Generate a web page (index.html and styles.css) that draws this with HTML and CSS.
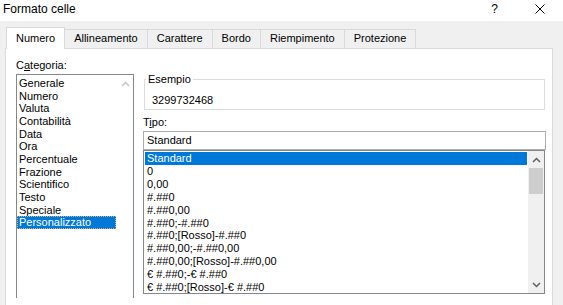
FILE: index.html
```html
<!DOCTYPE html>
<html lang="it">
<head>
    <meta charset="UTF-8">
    <title>Formato celle</title>
    <link rel="stylesheet" href="styles.css">
</head>
<body>

    <div class="titlebar">
        <span class="title">Formato celle</span>
        <span class="help">?</span>
        <svg class="close" width="10" height="10" viewBox="0 0 10 10">
            <path d="M0.5 0.5 L9.5 9.5 M9.5 0.5 L0.5 9.5" stroke="#000" stroke-width="1" fill="none"/>
        </svg>
    </div>

    <div class="dialog">
        <div class="tabs">
            <div class="tab active">Numero</div>
            <div class="tab">Allineamento</div>
            <div class="tab">Carattere</div>
            <div class="tab">Bordo</div>
            <div class="tab">Riempimento</div>
            <div class="tab">Protezione</div>
        </div>

        <div class="panel">
            <div class="col-left">
                <div class="label">C<u>a</u>tegoria:</div>
                <div class="listbox categories">
                    <ul class="items">
                        <li>Generale</li>
                        <li>Numero</li>
                        <li>Valuta</li>
                        <li>Contabilità</li>
                        <li>Data</li>
                        <li>Ora</li>
                        <li>Percentuale</li>
                        <li>Frazione</li>
                        <li>Scientifico</li>
                        <li>Testo</li>
                        <li>Speciale</li>
                        <li class="selected focus">Personalizzato</li>
                    </ul>
                    <div class="scrollbar disabled">
                        <div class="arrow">
                            <svg width="9" height="6" viewBox="0 0 9 6"><path d="M1 5 L4.5 1.5 L8 5" stroke="#c4c4c4" stroke-width="1.5" fill="none"/></svg>
                        </div>
                    </div>
                </div>
            </div>

            <div class="col-right">
                <fieldset class="sample">
                    <legend>Esempio</legend>
                    <div class="sample-value">3299732468</div>
                </fieldset>

                <div class="label">T<u>i</u>po:</div>
                <div class="input">Standard</div>

                <div class="listbox types">
                    <ul class="items">
                        <li class="selected">Standard</li>
                        <li>0</li>
                        <li>0,00</li>
                        <li>#.##0</li>
                        <li>#.##0,00</li>
                        <li>#.##0;-#.##0</li>
                        <li>#.##0;[Rosso]-#.##0</li>
                        <li>#.##0,00;-#.##0,00</li>
                        <li>#.##0,00;[Rosso]-#.##0,00</li>
                        <li>€ #.##0;-€ #.##0</li>
                        <li>€ #.##0;[Rosso]-€ #.##0</li>
                    </ul>
                    <div class="scrollbar">
                        <div class="arrow">
                            <svg width="9" height="6" viewBox="0 0 9 6"><path d="M1 5 L4.5 1.5 L8 5" stroke="#606060" stroke-width="1.5" fill="none"/></svg>
                        </div>
                        <div class="thumb"></div>
                        <div class="track"></div>
                        <div class="arrow">
                            <svg width="9" height="6" viewBox="0 0 9 6"><path d="M1 1 L4.5 4.5 L8 1" stroke="#606060" stroke-width="1.5" fill="none"/></svg>
                        </div>
                    </div>
                </div>
            </div>
        </div>
    </div>

</body>
</html>
```

FILE: styles.css
```css
body {
    margin: 0;
    width: 563px;
    height: 305px;
    overflow: hidden;
    font-family: 'Liberation Sans', Arial, sans-serif;
    font-size: 11px;
    color: #000;
    background: #f0f0f0;
}

ul {
    list-style: none;
    margin: 0;
    padding: 0;
}

.titlebar {
    height: 21px;
    background: #fff;
    display: flex;
    align-items: flex-start;
}

.title {
    flex: 1;
    font-size: 12px;
    line-height: 14px;
    padding: 2px 0 0 3px;
}

.help {
    font-size: 12px;
    line-height: 14px;
    padding-top: 2px;
    margin-right: 37px;
}

.close {
    margin: 4px 18px 0 0;
}

.dialog {
    height: 284px;
    background: #f0f0f0;
}

.tabs {
    display: flex;
    align-items: flex-end;
    height: 21px;
    margin-top: 6px;
    padding-left: 6px;
    position: relative;
    z-index: 1;
}

.tab {
    height: 18px;
    line-height: 17px;
    padding: 0 9px;
    border: 1px solid #d9d9d9;
    border-bottom: none;
    margin-left: -1px;
    background: #f0f0f0;
}

.tab:first-child {
    margin-left: 0;
}

.tab.active {
    height: 21px;
    line-height: 21px;
    background: #fff;
    margin-bottom: -1px;
    position: relative;
    z-index: 2;
}

.panel {
    margin: 0 10px 0 5px;
    height: 257px;
    background: #fff;
    border: 1px solid #d9d9d9;
    border-bottom: none;
    padding: 10px 0 0 10px;
    box-sizing: border-box;
    display: grid;
    grid-template-columns: 118px 403px;
    column-gap: 9px;
    align-items: start;
    overflow: hidden;
}

.label {
    line-height: 13px;
}

.listbox {
    display: flex;
    border: 1px solid #828790;
    box-sizing: border-box;
}

.items li {
    line-height: 12.9px;
    padding-left: 2px;
    white-space: nowrap;
}

.items li.selected {
    background: #0078d7;
    color: #fff;
}

.items li.focus {
    outline: 1px dotted #d9b26a;
    outline-offset: -1px;
}

/* Categoria */
.categories {
    margin-top: 2px;
    height: 224px;
    border-bottom: none;
}

.categories .items {
    width: 99px;
    padding-top: 2px;
}

.categories .items li {
    line-height: 12.65px;
}

.scrollbar {
    width: 16px;
    margin-left: 1px;
    background: #f0f0f0;
    display: flex;
    flex-direction: column;
}

.scrollbar.disabled {
    background: #fff;
}

.arrow {
    height: 17px;
    display: flex;
    align-items: center;
    justify-content: center;
}

/* Esempio */
.sample {
    margin: 14px 0 6px 1px;
    width: 401px;
    padding: 0 0 2px 0;
    border: 1px solid #dcdcdc;
    box-sizing: border-box;
}

.sample legend {
    margin-left: 1px;
    padding: 0 2px;
    line-height: 13px;
}

.sample-value {
    line-height: 13px;
    margin-top: 8px;
    padding-left: 7px;
}

.input {
    margin-top: 2px;
    height: 19px;
    line-height: 17px;
    padding-left: 3px;
    border: 1px solid #adadad;
    box-sizing: border-box;
}

/* Tipo */
.types {
    width: 402px;
    height: 144px;
}

.types .items {
    width: 382px;
    margin-left: 1px;
    padding-top: 1px;
}

.types .scrollbar {
    margin-left: 1px;
}

.thumb {
    height: 26px;
    margin: 0 1px;
    background: #cdcdcd;
}

.track {
    flex: 1;
}
```
